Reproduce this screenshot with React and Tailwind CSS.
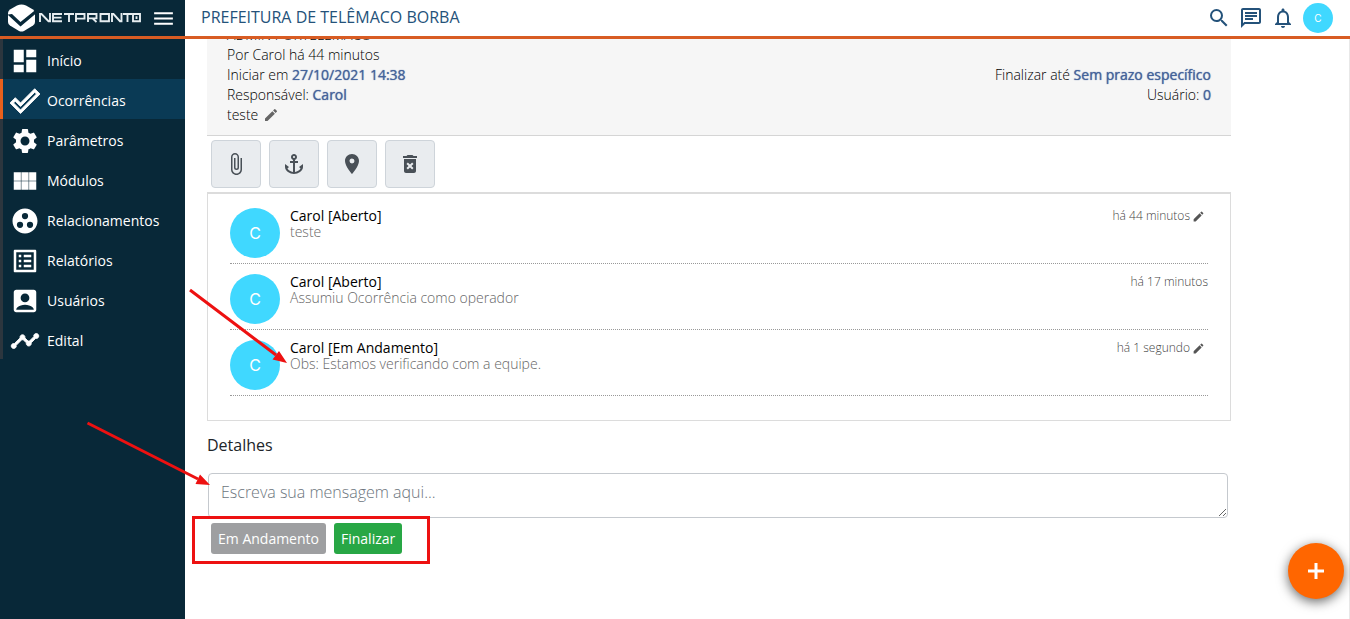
import React from "react";
import {
  MdDashboard, MdDoneOutline, MdSettings, MdGroupWork, MdListAlt, MdAccountBox, MdTimeline,
  MdSearch, MdOutlineChat, MdNotificationsNone, MdMenu, MdAttachFile, MdAnchor, MdLocationOn, MdDeleteForever, MdEdit,
} from "react-icons/md";

function Modules({ size }) {
  return (
    <svg width={size} height={size} viewBox="0 0 24 24" fill="currentColor">
      <path d="M3 5h5.700v6.800H3zM9.100 5h5.800v6.800H9.100zM15.300 5H21v6.800h-5.700zM3 12.200h5.700V19H3zM9.100 12.200h5.800V19H9.100zM15.300 12.200H21V19h-5.700z" />
    </svg>
  );
}

const nav = [
  { label: "Início", Icon: MdDashboard },
  { label: "Ocorrências", Icon: MdDoneOutline, active: true, heavy: true },
  { label: "Parâmetros", Icon: MdSettings },
  { label: "Módulos", Icon: Modules },
  { label: "Relacionamentos", Icon: MdGroupWork },
  { label: "Relatórios", Icon: MdListAlt },
  { label: "Usuários", Icon: MdAccountBox },
  { label: "Edital", Icon: MdTimeline, heavy: true },
];

const tools = [
  { label: "Anexar arquivo", Icon: MdAttachFile },
  { label: "Vincular", Icon: MdAnchor },
  { label: "Localização", Icon: MdLocationOn },
  { label: "Excluir", Icon: MdDeleteForever },
];

const comments = [
  { title: "Carol [Aberto]", text: "teste", time: "há 44 minutos", editable: true },
  { title: "Carol [Aberto]", text: "Assumiu Ocorrência como operador", time: "há 17 minutos" },
  { title: "Carol [Em Andamento]", text: "Obs: Estamos verificando com a equipe.", time: "há 1 segundo", editable: true },
];

function Logo() {
  return (
    <a href="#" aria-label="NETPRONTO" className="flex items-center">
      <svg width="134" height="28" viewBox="0 0 134 28" fill="none">
        <path d="M9 1.500Q13.500-.5 18 1.500L25 5.500Q27 7 27 9v9q0 2-2 3.500L16 27q-2.500 1-5 0L2 21.500Q0 20 0 18V9q0-2 2-3.500z" fill="#fff" />
        <path d="M-.5 10.500L4 10l8.500 8L28 5.500v4L12.500 22.500z" fill="#082838" />
        <g stroke="#e6edf0" strokeWidth="1.900">
          <path d="M32 18V10h1.500l7 7.200H42V9M54 10h-9v7.200h9M45 13.600h8.500M56 10h10M61 10v8M68 18v-8h8.500v4.600H68M80 18v-8h8.500v4.400H80M84.500 14.400l4 3.600M92.500 10h8.500v7.200h-8.500zM104 18v-8h1.500l6.500 7.200h1.500V9M115 10h9M119.500 10v8M125 10h7v7.200h-7zM128.500 12.300v2.800" />
        </g>
      </svg>
    </a>
  );
}

function Header() {
  return (
    <header className="fixed inset-x-0 top-0 z-10 flex h-[39px] border-b-3 border-[#d85c23] bg-white">
      <div className="flex w-[185px] shrink-0 items-center justify-between bg-[#082838] pl-2 pr-[9px]">
        <Logo />
        <button aria-label="Menu" className="text-white"><MdMenu size={25} /></button>
      </div>
      <h1 className="flex-1 truncate pl-4 text-base leading-[35px] text-[#24527a]">PREFEITURA DE TELÊMACO BORBA</h1>
      <div className="flex items-center gap-2 pr-[17px] text-[#24527a]">
        <button aria-label="Pesquisar"><MdSearch size={24} /></button>
        <button aria-label="Mensagens"><MdOutlineChat size={24} /></button>
        <button aria-label="Notificações"><MdNotificationsNone size={24} /></button>
        <button className="size-[30px] rounded-full bg-[#40d8ff] font-['Inter',sans-serif] text-[10px] text-white">C</button>
      </div>
    </header>
  );
}

function Sidebar() {
  return (
    <aside className="w-[185px] shrink-0 bg-[#082838] pt-[39px]">
      <nav>
        {nav.map(({ label, Icon, active, heavy }) => (
          <a
            key={label}
            href="#"
            className={`flex h-10 items-center gap-[7px] border-l-3 pl-[7px] pt-1 text-sm text-white ${active ? "border-[#e8601c] bg-[#0a3a55]" : "border-[#2c363e]"}`}
          >
            <Icon size={30} className={heavy ? "stroke-white stroke-[0.7] [&>path[fill=none]]:hidden" : ""} />
            {label}
          </a>
        ))}
      </nav>
    </aside>
  );
}

function Strong({ children }) {
  return <b className="font-normal text-[#45639b] [text-shadow:0_0_1px_#45639b]">{children}</b>;
}

function Summary() {
  return (
    <section className="flex items-end justify-between border-b border-[#d5d5d5] bg-[#f6f6f6] px-5 pb-[10px] pt-[25px] text-sm font-light leading-5 text-black">
      <div>
        <p>ADMIN PORTELEMACO</p>
        <p>Por Carol há 44 minutos</p>
        <p>Iniciar em <Strong>27/10/2021 14:38</Strong></p>
        <p>Responsável: <Strong>Carol</Strong></p>
        <p className="flex items-center gap-[5px]">teste <button aria-label="Editar" className="text-[#666]"><MdEdit size={16} /></button></p>
      </div>
      <div className="pb-5 text-right">
        <p>Finalizar até <Strong>Sem prazo específico</Strong></p>
        <p>Usuário: <Strong>0</Strong></p>
      </div>
    </section>
  );
}

function Annotations() {
  return (
    <svg aria-hidden="true" className="pointer-events-none absolute left-0 top-0 z-20" width="440" height="570" viewBox="0 0 440 570" fill="none">
      <g stroke="#ed1111" strokeWidth="3">
        <path d="M190 290L276 355M87.500 423L198 479" />
        <rect x="193.500" y="517.500" width="235" height="45" />
      </g>
      <path d="M287 363l-14.500-3.500 6.500-8.500zM210 485l-14.500-1 4.500-9.500z" fill="#ed1111" />
    </svg>
  );
}

export default function App() {
  return (
    <div className="relative flex min-h-screen bg-white font-['Open_Sans','Noto_Sans',sans-serif]">
      <Header />
      <Sidebar />
      <main className="min-w-0 flex-1 border-r border-[#e8e8e8] pl-[22px] pr-[118px]">
        <Summary />
        <div className="flex gap-2 p-1">
          {tools.map(({ label, Icon }) => (
            <button key={label} aria-label={label} className="flex h-12 w-[50px] items-center justify-center rounded-sm border border-[#ced4da] bg-[#e9ecef] text-[#495057]">
              <Icon size={24} />
            </button>
          ))}
        </div>
        <section className="border border-t-2 border-[#dcdcdc] px-[22px] pb-6 pt-1">
          {comments.map((c, i) => (
            <article key={i} className="flex gap-[10px] border-b border-dotted border-[#999] pb-[5px] pt-[10px]">
              <div className="flex size-[50px] items-center justify-center rounded-full bg-[#40d8ff] font-['Inter',sans-serif] text-base text-white">C</div>
              <div className="flex-1 text-sm leading-4">
                <h2 className="text-black">{c.title}</h2>
                <p className="font-light text-[#666]">{c.text}</p>
              </div>
              <div className="flex h-4 items-center gap-[2px] text-xs font-light text-[#444]">
                {c.time}
                {c.editable && <button aria-label="Editar" className="mr-[3px] text-[#555]"><MdEdit size={13} /></button>}
              </div>
            </article>
          ))}
        </section>
        <label htmlFor="msg" className="mt-3 block text-base leading-6 text-[#212529]">Detalhes</label>
        <textarea
          id="msg"
          placeholder="Escreva sua mensagem aqui..."
          className="mx-px mt-4 block h-[45px] w-[calc(100%-4px)] resize rounded-sm border border-[#c5c9ce] px-3 py-[6px] text-base font-light leading-6 placeholder:text-[#6c757d]"
        />
        <div className="mt-[5px] flex gap-2 pl-1 text-sm text-white">
          <button className="h-[31px] rounded-[3px] bg-[#9e9fa1] px-[7px]">Em Andamento</button>
          <button className="h-[31px] rounded-[3px] bg-[#28a745] px-[7px]">Finalizar</button>
        </div>
      </main>
      <button aria-label="Adicionar" className="fixed bottom-5 right-[6px] flex size-14 items-center justify-center rounded-full bg-[#ff6600] text-white shadow-[0_3px_12px_rgba(0,0,0,0.6)]">
        <svg width="18" height="18" viewBox="0 0 18 18" stroke="currentColor" strokeWidth="3">
          <path d="M9 1v16M1 9h16" />
        </svg>
      </button>
      <Annotations />
    </div>
  );
}
